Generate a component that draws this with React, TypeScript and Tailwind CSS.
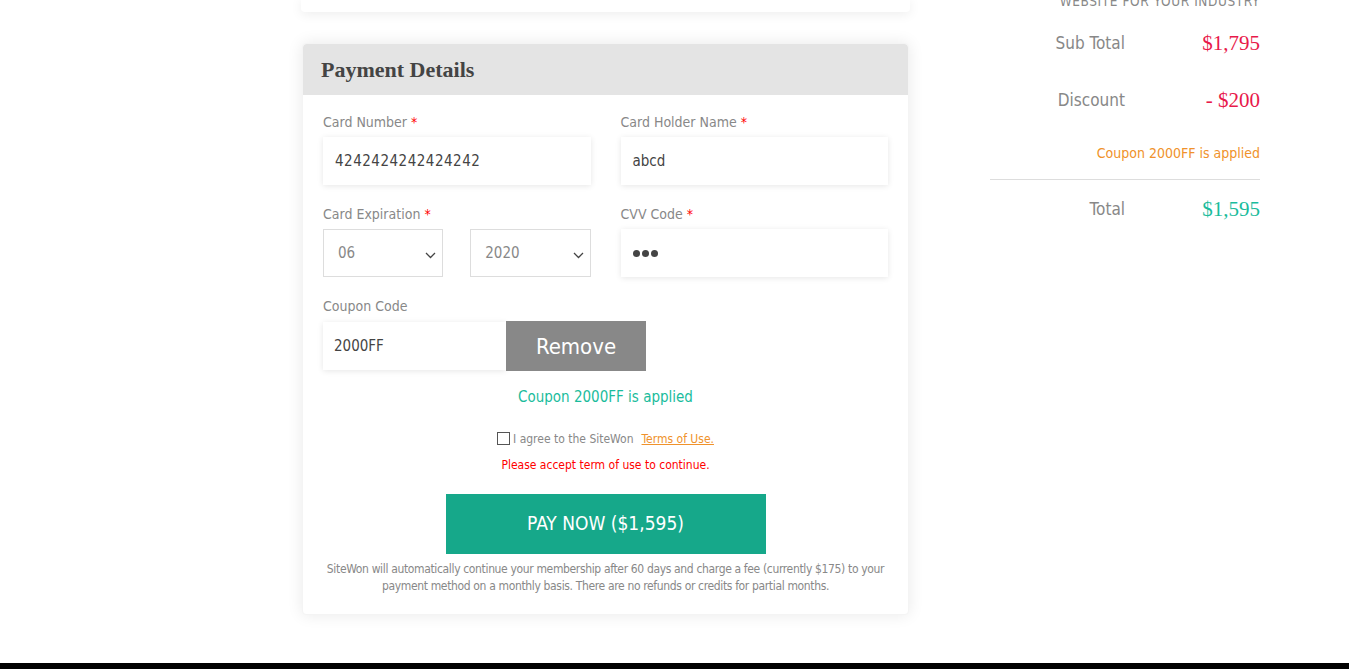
import React from "react";

const sans = "font-['Liberation_Sans_Narrow','DejaVu_Sans_Condensed','Roboto',sans-serif]";
const serif = "font-['Liberation_Serif','DejaVu_Serif',serif]";

function Label({ text, req }: { text: string; req?: boolean }) {
  return (
    <div className={`${sans} text-[14px] leading-[18px] text-[#888] mb-[6px]`}>
      {text}
      {req && <span className="text-[#ff0000] ml-[4px]">*</span>}
    </div>
  );
}

function Chevron() {
  return (
    <svg width="11" height="7" viewBox="0 0 11 7" className="absolute right-[6px] top-[22px]">
      <path d="M1 1l4.5 4.5L10 1" fill="none" stroke="#444" strokeWidth="1.3" />
    </svg>
  );
}

export default function App() {
  return (
    <div className={`${sans} w-[1349px] h-[669px] bg-white overflow-hidden relative`}>
      <div className="flex pl-[301px]">
        {/* Left column */}
        <div className="w-[609px] flex flex-col">
          <div className="h-[12px] bg-white rounded-b-[4px] shadow-[0_2px_12px_rgba(0,0,0,0.08)]" />
          <div className="mt-[31px] ml-[1px] w-[607px] bg-white rounded-[4px] shadow-[0_0_16px_rgba(0,0,0,0.09)] border border-[#f4f4f4]">
            <div className="h-[51px] bg-[#e4e4e4] rounded-t-[4px] flex items-center px-[18px]">
              <span className={`${serif} text-[22px] font-bold text-[#444] tracking-[0px]`}>Payment Details</span>
            </div>
            <div className="px-[20px] pt-[18px] pb-[19px]">
              <div className="grid grid-cols-2 gap-x-[30px]">
                <div>
                  <Label text="Card Number" req />
                  <div className="h-[48px] bg-white shadow-[0_1px_6px_rgba(0,0,0,0.1)] flex items-center px-[12px] text-[15px] text-[#444] tracking-[0.5px]">
                    4242424242424242
                  </div>
                </div>
                <div>
                  <Label text="Card Holder Name" req />
                  <div className="h-[48px] bg-white shadow-[0_1px_6px_rgba(0,0,0,0.1)] flex items-center px-[12px] text-[15px] text-[#444]">
                    abcd
                  </div>
                </div>
              </div>
              <div className="grid grid-cols-2 gap-x-[30px] mt-[20px]">
                <div>
                  <Label text="Card Expiration" req />
                  <div className="grid grid-cols-2 gap-x-[27px]">
                    <div className="relative h-[48px] border border-[#ddd] flex items-center px-[14px] text-[15px] text-[#888]">
                      06
                      <Chevron />
                    </div>
                    <div className="relative h-[48px] border border-[#ddd] flex items-center px-[14px] text-[15px] text-[#888]">
                      2020
                      <Chevron />
                    </div>
                  </div>
                </div>
                <div>
                  <Label text="CVV Code" req />
                  <div className="h-[48px] bg-white shadow-[0_1px_6px_rgba(0,0,0,0.1)] flex items-center px-[12px] gap-[2px]">
                    <span className="w-[7px] h-[7px] rounded-full bg-[#444]" />
                    <span className="w-[7px] h-[7px] rounded-full bg-[#444]" />
                    <span className="w-[7px] h-[7px] rounded-full bg-[#444]" />
                  </div>
                </div>
              </div>
              <div className="mt-[20px]">
                <Label text="Coupon Code" />
                <div className="flex items-center">
                  <div className="w-[183px] h-[48px] bg-white shadow-[0_1px_6px_rgba(0,0,0,0.1)] flex items-center px-[11px] text-[15px] text-[#444]">
                    2000FF
                  </div>
                  <div className="w-[140px] h-[50px] bg-[#888] text-white text-[22px] flex items-center justify-center">
                    Remove
                  </div>
                </div>
              </div>
              <div className="text-center text-[15px] text-[#1abc9c] mt-[15px]">Coupon 2000FF is applied</div>
              <div className="flex items-center justify-center mt-[21px] text-[12px] text-[#888]">
                <span className="w-[13px] h-[13px] border border-[#555] bg-white mr-[3px]" />
                <span>I agree to the SiteWon</span>
                <span className="ml-[8px] text-[#f0922b] underline">Terms of Use.</span>
              </div>
              <div className="text-center text-[12px] text-[#ff0000] mt-[8px]">Please accept term of use to continue.</div>
              <div className="flex justify-center mt-[20px]">
                <div className="w-[320px] h-[60px] bg-[#16a88a] text-white text-[19px] flex items-center justify-center">
                  PAY NOW ($1,595)
                </div>
              </div>
              <div className="text-center text-[12px] leading-[17px] text-[#888] mt-[7px] tracking-[-0.35px] whitespace-nowrap">
                SiteWon will automatically continue your membership after 60 days and charge a fee (currently $175) to your
                <br />
                payment method on a monthly basis. There are no refunds or credits for partial months.
              </div>
            </div>
          </div>
        </div>
        {/* Right column */}
        <div className="ml-[80px] w-[270px] flex flex-col">
          <div className="mt-[-9px] text-[13.5px] text-[#888] text-right tracking-[0.6px]">WEBSITE FOR YOUR INDUSTRY</div>
          <div className="flex items-center mt-[17px] h-[30px]">
            <div className="w-[135px] text-right text-[17px] text-[#888]">Sub Total</div>
            <div className={`${serif} flex-1 text-right text-[21px] text-[#e8194a]`}>$1,795</div>
          </div>
          <div className="flex items-center mt-[27px] h-[30px]">
            <div className="w-[135px] text-right text-[17px] text-[#888]">Discount</div>
            <div className={`${serif} flex-1 text-right text-[21px] text-[#e8194a]`}>- $200</div>
          </div>
          <div className="text-right text-[14px] text-[#f0922b] mt-[28px]">Coupon 2000FF is applied</div>
          <div className="h-px bg-[#ddd] mt-[15px]" />
          <div className="flex items-center mt-[14px] h-[30px]">
            <div className="w-[135px] text-right text-[17px] text-[#888]">Total</div>
            <div className={`${serif} flex-1 text-right text-[21px] text-[#1abc9c]`}>$1,595</div>
          </div>
        </div>
      </div>
      <div className="absolute left-0 right-0 bottom-0 h-[6px] bg-black" />
    </div>
  );
}
